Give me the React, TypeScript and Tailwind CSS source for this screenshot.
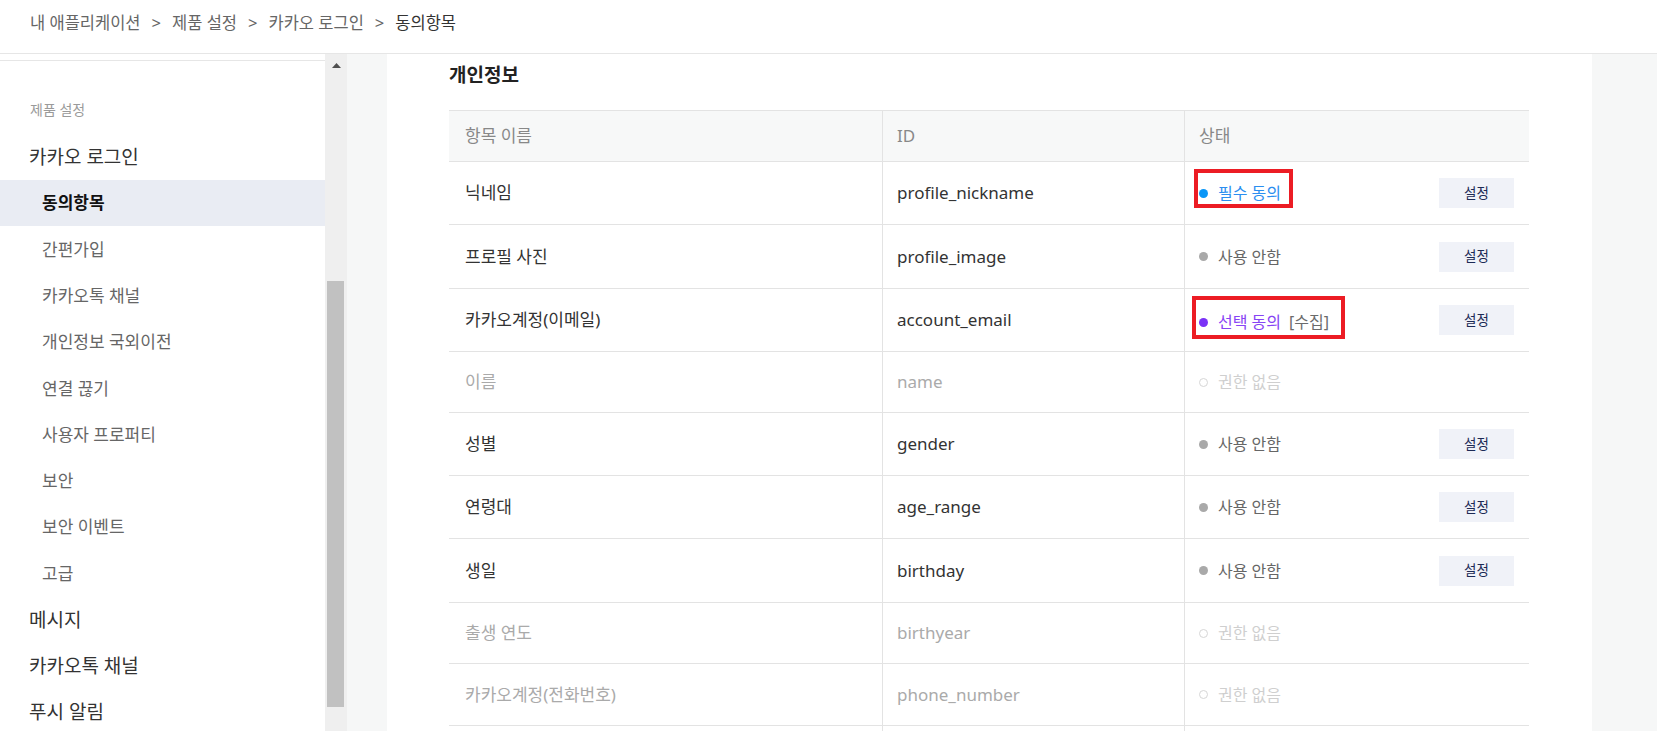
import React from "react";

type Status = "required" | "optional" | "unused" | "none";

type Row = {
  name: string;
  id: string;
  status: Status;
  h: string;
  marked?: boolean;
};

const rows: Row[] = [
  { name: "닉네임", id: "profile_nickname", status: "required", h: "h-[63px]", marked: true },
  { name: "프로필 사진", id: "profile_image", status: "unused", h: "h-[64px]" },
  { name: "카카오계정(이메일)", id: "account_email", status: "optional", h: "h-[63px]", marked: true },
  { name: "이름", id: "name", status: "none", h: "h-[61px]" },
  { name: "성별", id: "gender", status: "unused", h: "h-[63px]" },
  { name: "연령대", id: "age_range", status: "unused", h: "h-[63px]" },
  { name: "생일", id: "birthday", status: "unused", h: "h-[64px]" },
  { name: "출생 연도", id: "birthyear", status: "none", h: "h-[61px]" },
  { name: "카카오계정(전화번호)", id: "phone_number", status: "none", h: "h-[62px]" },
];

const subMenu = [
  "동의항목",
  "간편가입",
  "카카오톡 채널",
  "개인정보 국외이전",
  "연결 끊기",
  "사용자 프로퍼티",
  "보안",
  "보안 이벤트",
  "고급",
];

const crumbs = ["내 애플리케이션", "제품 설정", "카카오 로그인", "동의항목"];

function StatusLabel({ status, marked }: { status: Status; marked?: boolean }) {
  if (status === "required") {
    return (
      <span className="relative inline-flex items-center h-[24px]">
        <span className="w-[9px] h-[9px] rounded-full bg-[#0a96f7]" />
        <span className="ml-[10px] text-[#2b8ef0]">필수 동의</span>
        {marked && (
          <span className="absolute -left-[5px] -right-[12px] -top-[12px] -bottom-[3px] border-[4px] border-[#ec1c24]" />
        )}
      </span>
    );
  }
  if (status === "optional") {
    return (
      <span className="relative inline-flex items-center h-[24px] mt-[4px]">
        <span className="w-[9px] h-[9px] rounded-full bg-[#7a32f6]" />
        <span className="ml-[10px] text-[#8744f4]">선택 동의</span>
        <span className="ml-[8px] text-[#6b6b6b]">[수집]</span>
        {marked && (
          <span className="absolute -left-[7px] -right-[16px] -top-[14px] -bottom-[5px] border-[4px] border-[#ec1c24]" />
        )}
      </span>
    );
  }
  if (status === "unused") {
    return (
      <span className="inline-flex items-center h-[24px]">
        <span className="w-[9px] h-[9px] rounded-full bg-[#a9a9a9]" />
        <span className="ml-[10px] text-[#666]">사용 안함</span>
      </span>
    );
  }
  return (
    <span className="inline-flex items-center h-[24px]">
      <span className="w-[9px] h-[9px] rounded-full border border-[#d6d6d6]" />
      <span className="ml-[10px] text-[#cfcfcf]">권한 없음</span>
    </span>
  );
}

export default function App() {
  return (
    <div className="h-screen overflow-hidden flex flex-col bg-white font-['Noto_Sans','Noto_Sans_CJK_KR',sans-serif]">
      {/* breadcrumb */}
      <div className="h-[54px] shrink-0 border-b border-[#e6e6e6] flex items-start pt-[11px] pl-[30px] text-[16.5px] leading-[24px]">
        {crumbs.map((c, i) => (
          <React.Fragment key={i}>
            {i > 0 && <span className="mx-[11px] text-[#666]">&gt;</span>}
            <span className={i === crumbs.length - 1 ? "text-[#333]" : "text-[#666]"}>{c}</span>
          </React.Fragment>
        ))}
      </div>

      <div className="flex-1 flex min-h-0 bg-[#f6f7f7]">
        {/* sidebar */}
        <aside className="w-[325px] shrink-0 bg-white pt-[6px]">
          <div className="border-t border-[#e6e6e6]">
            <div className="pl-[30px] mt-[39px] text-[14px] leading-[20px] text-[#9a9a9a]">제품 설정</div>
            <div className="mt-[14px] h-[46px] flex items-center pl-[29px] text-[19px] text-[#333]">카카오 로그인</div>
            {subMenu.map((m, i) => (
              <div
                key={m}
                className={`h-[46.3px] flex items-center pl-[42px] text-[17px] ${
                  i === 0 ? "bg-[#e9ecf3] font-bold text-[#111]" : "text-[#666]"
                }`}
              >
                {m}
              </div>
            ))}
            {["메시지", "카카오톡 채널", "푸시 알림"].map((m) => (
              <div key={m} className="h-[46.3px] flex items-center pl-[29px] text-[19px] text-[#333]">
                {m}
              </div>
            ))}
          </div>
        </aside>

        {/* fake scrollbar */}
        <div className="w-[22px] shrink-0 bg-[#efefef] flex flex-col">
          <div className="h-[22px] flex items-center justify-center pl-[1px]">
            <svg width="9" height="5" viewBox="0 0 9 5">
              <polygon points="4.5,0 9,5 0,5" fill="#505050" />
            </svg>
          </div>
          <div className="mt-[205px] ml-[2px] w-[17px] h-[426px] bg-[#c1c1c1]" />
        </div>

        <div className="w-[40px] shrink-0" />

        {/* main card */}
        <main className="w-[1205px] shrink-0 bg-white pl-[62px] pr-[63px] pt-[8px]">
          <h2 className="text-[19px] leading-[26px] font-semibold text-[#222]">개인정보</h2>

          <div className="mt-[22px] text-[17px]">
            <div className="flex h-[52px] bg-[#f7f8f8] border-y border-[#e3e3e3] text-[#888]">
              <div className="w-[434px] border-r border-[#e3e3e3] pl-[16px] flex items-center">항목 이름</div>
              <div className="w-[302px] border-r border-[#e3e3e3] pl-[14px] flex items-center">ID</div>
              <div className="flex-1 pl-[14px] flex items-center">상태</div>
            </div>
            {rows.map((r) => {
              const off = r.status === "none";
              return (
                <div key={r.id} className={`flex ${r.h} border-b border-[#e3e3e3]`}>
                  <div
                    className={`w-[434px] border-r border-[#e3e3e3] pl-[16px] flex items-center ${
                      off ? "text-[#aaa]" : "text-[#333]"
                    }`}
                  >
                    {r.name}
                  </div>
                  <div
                    className={`w-[302px] border-r border-[#e3e3e3] pl-[14px] flex items-center ${
                      off ? "text-[#aaa]" : "text-[#333]"
                    }`}
                  >
                    {r.id}
                  </div>
                  <div className="flex-1 pl-[14px] pr-[15px] flex items-center justify-between text-[16px]">
                    <StatusLabel status={r.status} marked={r.marked} />
                    {!off && (
                      <button className="w-[75px] h-[30px] bg-[#f0f2f8] text-[13.5px] text-[#1c2a55]">설정</button>
                    )}
                  </div>
                </div>
              );
            })}
            {/* next row, below the fold */}
            <div className="flex h-[61px]">
              <div className="w-[434px] border-r border-[#e3e3e3]" />
              <div className="w-[302px] border-r border-[#e3e3e3]" />
              <div className="flex-1" />
            </div>
          </div>
        </main>

        <div className="flex-1" />
      </div>
    </div>
  );
}
